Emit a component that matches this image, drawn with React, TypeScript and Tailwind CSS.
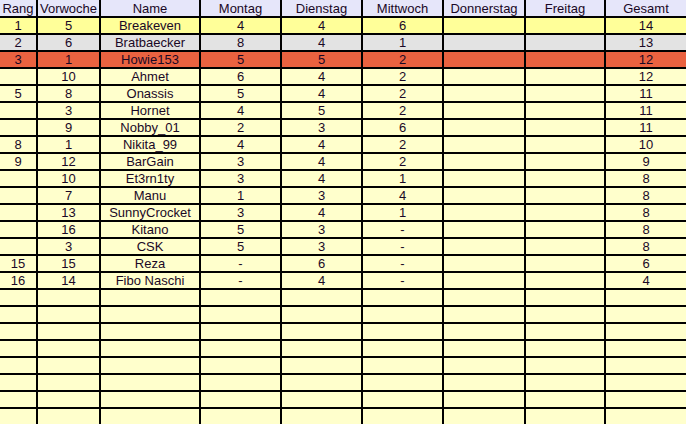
const headers = ['Rang', 'Vorwoche', 'Name', 'Montag', 'Dienstag', 'Mittwoch', 'Donnerstag', 'Freitag', 'Gesamt'];

const rows: string[][] = [
  ['1', '5', 'Breakeven', '4', '4', '6', '', '', '14'],
  ['2', '6', 'Bratbaecker', '8', '4', '1', '', '', '13'],
  ['3', '1', 'Howie153', '5', '5', '2', '', '', '12'],
  ['', '10', 'Ahmet', '6', '4', '2', '', '', '12'],
  ['5', '8', 'Onassis', '5', '4', '2', '', '', '11'],
  ['', '3', 'Hornet', '4', '5', '2', '', '', '11'],
  ['', '9', 'Nobby_01', '2', '3', '6', '', '', '11'],
  ['8', '1', 'Nikita_99', '4', '4', '2', '', '', '10'],
  ['9', '12', 'BarGain', '3', '4', '2', '', '', '9'],
  ['', '10', 'Et3rn1ty', '3', '4', '1', '', '', '8'],
  ['', '7', 'Manu', '1', '3', '4', '', '', '8'],
  ['', '13', 'SunnyCrocket', '3', '4', '1', '', '', '8'],
  ['', '16', 'Kitano', '5', '3', '-', '', '', '8'],
  ['', '3', 'CSK', '5', '3', '-', '', '', '8'],
  ['15', '15', 'Reza', '-', '6', '-', '', '', '6'],
  ['16', '14', 'Fibo Naschi', '-', '4', '-', '', '', '4'],
];

// pad with empty rows to fill the sheet
while (rows.length < 24) rows.push(['', '', '', '', '', '', '', '', '']);

function rowBg(i: number) {
  if (i === 0) return 'bg-[#ffff99]';
  if (i === 1) return 'bg-[#e3e3e3]';
  if (i === 2) return 'bg-[#ea6240]';
  return 'bg-[#ffffcc]';
}

export default function App() {
  return (
    <div className="w-[686px] h-[424px] overflow-hidden bg-black font-['Liberation_Sans',Arial,sans-serif] text-[13px] text-[#1a0826]">
      <div className="grid grid-cols-[36px_61px_98px_79px_79px_79px_80px_78px_80px] grid-rows-[16px] auto-rows-[15px] gap-[2px]">
        {headers.map((h) => (
          <div key={h} className="bg-[#e6e6fa] flex items-center justify-center leading-none whitespace-nowrap overflow-hidden">
            {h}
          </div>
        ))}
        {rows.map((row, i) =>
          row.map((cell, j) => (
            <div key={`${i}-${j}`} className={`${rowBg(i)} flex items-center justify-center leading-none`}>
              {cell}
            </div>
          ))
        )}
      </div>
    </div>
  );
}
